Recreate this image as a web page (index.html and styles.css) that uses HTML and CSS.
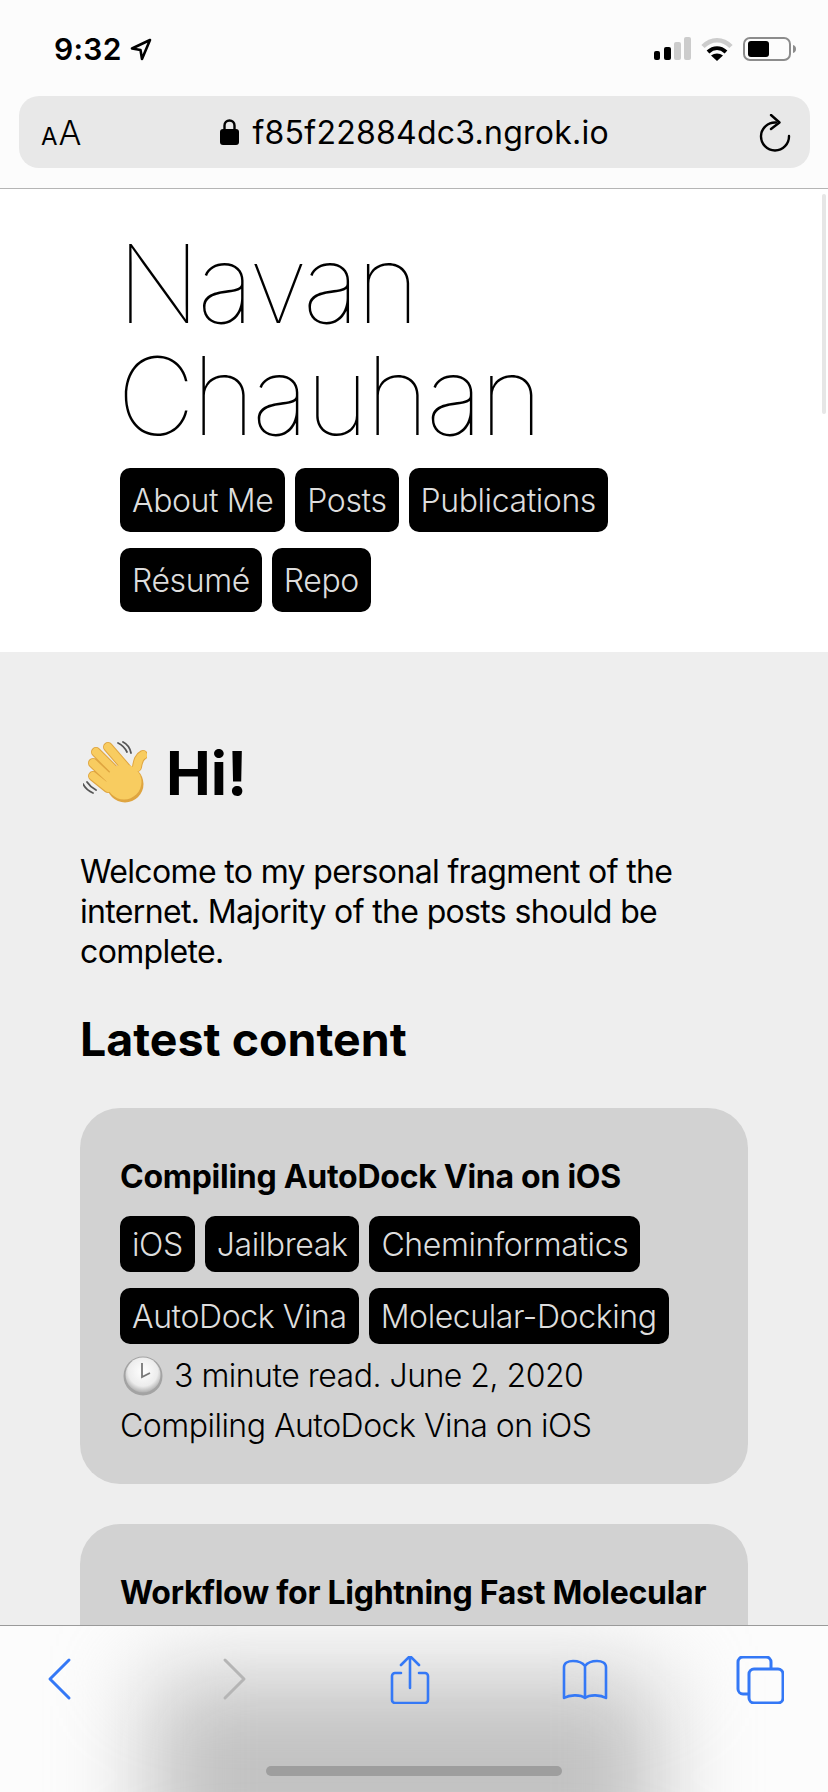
FILE: index.html
```html
<!DOCTYPE html>
<html lang="en">
<head>
<meta charset="UTF-8">
<meta name="viewport" content="width=device-width, initial-scale=1.0">
<title>Navan Chauhan</title>
<link rel="stylesheet" href="styles.css">
</head>
<body>

<div class="phone">

  <div class="top-chrome">
    <div class="status-bar">
      <div class="status-time">
        <span>9:32</span>
        <svg class="location-icon" width="22" height="24" viewBox="0 0 22 24"><path d="M20 3 2 11.500l8.500 1.500 1.500 9z" fill="none" stroke="#000" stroke-width="2.600" stroke-linejoin="round"/></svg>
      </div>
      <div class="status-icons">
        <svg width="37" height="23" viewBox="0 0 37 23">
          <rect x="0" y="14" width="6" height="9" rx="2" fill="#000"/>
          <rect x="10" y="10" width="7" height="13" rx="2" fill="#000"/>
          <rect x="20" y="5" width="7" height="18" rx="2" fill="#ccc"/>
          <rect x="30" y="0" width="7" height="23" rx="2" fill="#ccc"/>
        </svg>
        <svg width="32" height="24" viewBox="0 0 32 24">
          <path d="M2 9.500C10 1 22 1 30 9.500" fill="none" stroke="#ccc" stroke-width="4.500"/>
          <path d="M7 15c5.500-5 12.500-5 18 0" fill="none" stroke="#000" stroke-width="4"/>
          <path d="m16 24-6-5.500c3.500-2.800 8.500-2.800 12 0z" fill="#000"/>
        </svg>
        <svg width="53" height="24" viewBox="0 0 53 24">
          <rect x="1" y="1" width="46" height="22" rx="6" fill="none" stroke="#8c8c8c" stroke-width="2"/>
          <rect x="5" y="4" width="21" height="16" rx="3" fill="#000"/>
          <path d="M50 8c2 .5 3 2 3 4s-1 3.500-3 4z" fill="#8c8c8c"/>
        </svg>
      </div>
    </div>
    <div class="url-bar">
      <span class="aa"><small>A</small>A</span>
      <div class="url">
        <svg width="19" height="26" viewBox="0 0 19 26"><path d="M4.500 12V6.500a5 5 0 0 1 10 0V12" fill="none" stroke="#000" stroke-width="2.400"/><rect x="0" y="10" width="19" height="16" rx="3" fill="#000"/></svg>
        <span>f85f22884dc3.ngrok.io</span>
      </div>
      <svg class="reload" width="32" height="38" viewBox="0 0 32 38"><path d="M17 8.500A14 14 0 1 0 30 22" fill="none" stroke="#000" stroke-width="2.400" stroke-linecap="round"/><path d="m12 1 8.500 7.500L12 15" fill="none" stroke="#000" stroke-width="2.400" stroke-linecap="round" stroke-linejoin="round"/></svg>
    </div>
  </div>

  <div class="page">
    <div class="scroll-thumb"></div>

    <header class="site-header">
      <h1 class="site-title">Navan<br>Chauhan</h1>
      <nav class="tags nav-tags">
        <a class="tag">About Me</a>
        <a class="tag">Posts</a>
        <a class="tag">Publications</a>
        <a class="tag">Résumé</a>
        <a class="tag">Repo</a>
      </nav>
    </header>

    <main class="content">
      <h1 class="hello">
        <svg class="wave" width="64" height="64" viewBox="0 0 64 64">
          <g fill="none" stroke="#555" stroke-width="1.800" stroke-linecap="round">
            <path d="M35 2c4 2 7 5 9 9"/>
            <path d="M40 1c4 2 7 6 8 11"/>
            <path d="M0 43c2 4 5 7 10 9"/>
            <path d="M4 41c2 3 5 6 9 8"/>
          </g>
          <g fill="none" stroke-linecap="round">
            <g stroke="#dfa540" stroke-width="10">
              <path d="M25 6 44 28M13 11l20 20M10 22l17 16M10 35l15 12M60 14c-4 2-5 6-6 12"/>
            </g>
            <circle cx="42" cy="43" r="18.500" fill="#dfa540"/>
            <g stroke="#f8cc60" stroke-width="8">
              <path d="M25 6 44 28M13 11l20 20M10 22l17 16M10 35l15 12M60 14c-4 2-5 6-6 12"/>
            </g>
            <circle cx="41" cy="41" r="17.500" fill="#f8cc60"/>
          </g>
        </svg>
        <span>Hi!</span>
      </h1>
      <p class="intro">Welcome to my personal fragment of the internet. Majority of the posts should be complete.</p>
      <h2 class="section-title">Latest content</h2>

      <article class="card">
        <h3 class="card-title">Compiling AutoDock Vina on iOS</h3>
        <div class="tags">
          <a class="tag">iOS</a>
          <a class="tag">Jailbreak</a>
          <a class="tag">Cheminformatics</a>
          <a class="tag">AutoDock Vina</a>
          <a class="tag">Molecular-Docking</a>
        </div>
        <div class="meta">
          <svg width="42" height="40" viewBox="0 0 42 40">
            <defs>
              <radialGradient id="clock-face" cx="50%" cy="40%" r="60%">
                <stop offset="0%" stop-color="#fff"/>
                <stop offset="70%" stop-color="#ececec"/>
                <stop offset="100%" stop-color="#b0b0b0"/>
              </radialGradient>
            </defs>
            <circle cx="21" cy="20" r="19.500" fill="#a3a3a3"/>
            <circle cx="21" cy="19" r="17.500" fill="url(#clock-face)"/>
            <path d="M20 7v14l8-4" fill="none" stroke="#777" stroke-width="1.800"/>
          </svg>
          <span>3 minute read. June 2, 2020</span>
        </div>
        <p class="card-text">Compiling AutoDock Vina on iOS</p>
      </article>

      <article class="card card-next">
        <h3 class="card-title">Workflow for Lightning Fast Molecular</h3>
      </article>
    </main>
  </div>

  <div class="bottom-bar">
    <div class="bottom-blur"></div>
    <div class="toolbar">
      <svg width="48" height="48" viewBox="0 0 48 48"><path d="M33 5 14 24l19 19" transform="translate(0 -1)" fill="none" stroke="#3478f6" stroke-width="3" stroke-linecap="round" stroke-linejoin="round"/></svg>
      <svg width="48" height="48" viewBox="0 0 48 48"><path d="m14 5 19 19-19 19" transform="translate(0 -1)" fill="none" stroke="#b5b5b5" stroke-width="3" stroke-linecap="round" stroke-linejoin="round"/></svg>
      <svg width="48" height="48" viewBox="0 0 48 48"><path d="M15 17h-6a3 3 0 0 0-3 3v24a3 3 0 0 0 3 3h30a3 3 0 0 0 3-3V20a3 3 0 0 0-3-3h-6M24 32V1M15 9l9-9 9 9" fill="none" stroke="#3478f6" stroke-width="2.600" stroke-linecap="round"/></svg>
      <svg width="48" height="48" viewBox="0 0 48 48"><path d="M24 10c-3-4-7-5-12-5-5 0-9 2-9 6v31c5-3 16-4 21 0 5-4 16-3 21 0V11c0-4-4-6-9-6-5 0-9 1-12 5zM24 10v32" fill="none" stroke="#3478f6" stroke-width="2.600" stroke-linejoin="round"/></svg>
      <svg width="48" height="48" viewBox="0 0 48 48"><rect x="13" y="13" width="34" height="34" rx="5" fill="none" stroke="#3478f6" stroke-width="3"/><path d="M12 38H7a5 5 0 0 1-5-5V6a5 5 0 0 1 5-5h23a5 5 0 0 1 5 5v6" fill="none" stroke="#3478f6" stroke-width="3"/></svg>
    </div>
    <div class="home-bar"></div>
  </div>

</div>

</body>
</html>
```

FILE: styles.css
```css
* {
  box-sizing: border-box;
}
html, body {
  margin: 0;
  padding: 0;
}
body {
  font-family: Inter, "Liberation Sans", sans-serif;
  color: #000;
  background: #eee;
}
.phone {
  width: 828px;
  height: 1792px;
  display: flex;
  flex-direction: column;
  overflow: hidden;
}

/* safari top */
.top-chrome {
  height: 189px;
  flex-shrink: 0;
  background: #fcfcfc;
  border-bottom: 1px solid #b5b5b5;
  padding: 0 18px 0 19px;
}
.status-bar {
  height: 96px;
  display: flex;
  justify-content: space-between;
  padding: 31px 14px 0 35px;
}
.status-time {
  display: flex;
  align-items: flex-start;
  gap: 8px;
  font-size: 30px;
  font-weight: 600;
  letter-spacing: .3px;
  line-height: 36px;
}
.location-icon {
  margin-top: 6px;
}
.status-icons {
  display: flex;
  align-items: flex-start;
  gap: 10px;
  padding-top: 6px;
}
.url-bar {
  height: 72px;
  border-radius: 20px;
  background: #e8e8e8;
  display: flex;
  align-items: center;
  justify-content: space-between;
  padding: 0 19px 0 22px;
}
.aa {
  font-size: 34px;
  font-weight: 300;
  display: flex;
  align-items: baseline;
  gap: 1px;
}
.aa small {
  font-size: 24px;
  font-weight: 400;
}
.url {
  display: flex;
  align-items: center;
  gap: 13px;
  margin-right: 11px;
  font-size: 32px;
  font-weight: 400;
  letter-spacing: .25px;
}
.reload {
  margin-top: 2px;
}

/* page */
.page {
  position: relative;
  flex: 1;
  min-height: 0;
  overflow: hidden;
  background: #eee;
}
.scroll-thumb {
  position: absolute;
  top: 5px;
  right: 2px;
  width: 4px;
  height: 220px;
  border-radius: 2px;
  background: #e6e6e6;
}
.site-header {
  height: 463px;
  background: #fff;
  padding: 39px 80px 0 120px;
}
.site-title {
  margin: 0 0 0 -3px;
  font-size: 108px;
  font-weight: 100;
  letter-spacing: -3px;
  line-height: 112px;
}
.tags {
  display: flex;
  flex-wrap: wrap;
  gap: 16px 10px;
}
.nav-tags {
  margin-top: 16px;
}
.tag {
  height: 64px;
  display: flex;
  align-items: center;
  padding: 0 12px;
  border-radius: 10px;
  background: #000;
  color: #ddd;
  font-size: 32px;
  font-weight: 300;
  letter-spacing: -.4px;
}
.content {
  padding: 85px 80px 0;
}
.hello {
  margin: 0 0 0 3px;
  display: flex;
  align-items: center;
  gap: 19px;
  font-size: 60px;
  font-weight: 700;
  line-height: 72px;
}
.intro {
  margin: 43px 0 0;
  font-size: 32px;
  font-weight: 400;
  letter-spacing: -.65px;
  line-height: 40px;
}
.section-title {
  margin: 40px 0 0;
  font-size: 46.500px;
  font-weight: 700;
  line-height: 54px;
}
.card {
  margin-top: 42px;
  padding: 51px 40px 38px;
  border-radius: 40px;
  background: #d2d2d2;
}
.card-next {
  margin-top: 40px;
  min-height: 240px;
}
.card-title {
  margin: 0;
  font-size: 32px;
  font-weight: 700;
  letter-spacing: -.27px;
  line-height: 36px;
}
.card .tags {
  margin-top: 21px;
}
.card .tag {
  height: 56px;
}
.meta {
  display: flex;
  align-items: center;
  gap: 10px;
  margin-top: 12px;
  font-size: 32px;
  font-weight: 300;
  letter-spacing: -.5px;
  line-height: 40px;
}
.meta svg {
  margin-left: 2px;
}
.card-text {
  margin: 10px 0 0;
  font-size: 32px;
  font-weight: 300;
  letter-spacing: -.5px;
  line-height: 40px;
}

/* safari bottom */
.bottom-bar {
  position: relative;
  height: 167px;
  flex-shrink: 0;
  overflow: hidden;
  background: #fcfcfc;
  border-top: 1px solid #9a9a9a;
}
.bottom-blur {
  position: absolute;
  left: 150px;
  right: 170px;
  top: 50px;
  height: 200px;
  background: #c2c2c2;
  filter: blur(45px);
}
.toolbar {
  position: relative;
  display: flex;
  justify-content: space-between;
  padding: 30px 44px 0 36px;
}
.home-bar {
  position: absolute;
  left: 266px;
  bottom: 16px;
  width: 296px;
  height: 10px;
  border-radius: 5px;
  background: #9e9e9e;
}
```
